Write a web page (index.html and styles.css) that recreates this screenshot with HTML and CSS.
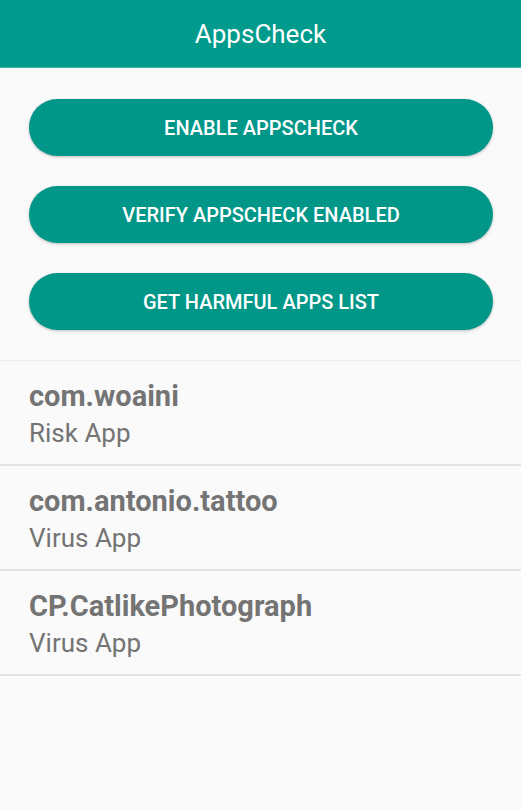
FILE: index.html
```html
<!DOCTYPE html>
<html>
<head>
<meta charset="utf-8">
<link rel="stylesheet" href="styles.css">
</head>
<body>
<header class="appbar">AppsCheck</header>
<div class="actions">
  <button class="btn">ENABLE APPSCHECK</button>
  <button class="btn">VERIFY APPSCHECK ENABLED</button>
  <button class="btn">GET HARMFUL APPS LIST</button>
</div>
<ul class="list">
  <li class="item"><div class="title">com.woaini</div><div class="sub">Risk App</div></li>
  <li class="item"><div class="title">com.antonio.tattoo</div><div class="sub">Virus App</div></li>
  <li class="item"><div class="title">CP.CatlikePhotograph</div><div class="sub">Virus App</div></li>
</ul>
</body>
</html>
```
FILE: styles.css
```css
html, body {
  margin: 0;
  padding: 0;
  background: #fafafa;
  font-family: Roboto, "Liberation Sans", sans-serif;
}
.appbar {
  height: 68px;
  background: #009b8c;
  color: #ffffff;
  font-size: 26px;
  display: flex;
  align-items: center;
  justify-content: center;
  border-bottom: 1px solid #3fb3a7;
  box-sizing: border-box;
}
.actions {
  display: flex;
  flex-direction: column;
  gap: 30px;
  padding: 31px 28px 30px 29px;
}
.btn {
  height: 57px;
  border: none;
  border-radius: 29px;
  background: #009688;
  color: #ffffff;
  font-family: Roboto, "Liberation Sans", sans-serif;
  font-weight: 500;
  font-size: 20px;
  box-shadow: 0 1px 3px rgba(0,0,0,0.25);
}
.list {
  list-style: none;
  margin: 0;
  padding: 0;
  border-top: 1px solid #eceee6;
}
.item {
  height: 105px;
  border-bottom: 2px solid #e2e2e2;
  padding: 18px 29px 0;
  box-sizing: border-box;
  color: #747474;
}
.title {
  font-size: 29px;
  font-weight: 700;
  line-height: 34px;
}
.sub {
  font-size: 26px;
  line-height: 30px;
  margin-top: 5px;
}
```
